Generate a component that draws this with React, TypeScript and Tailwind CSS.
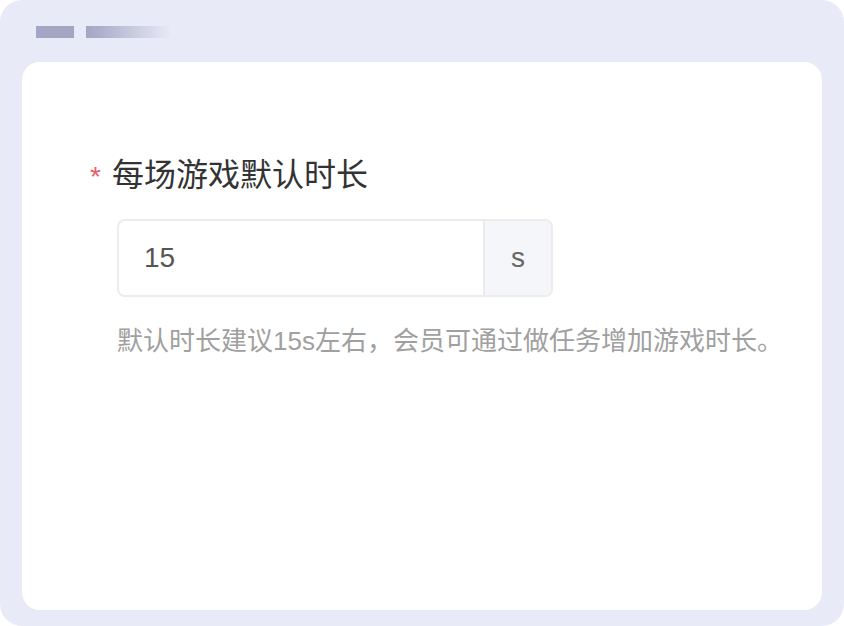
import React from "react";

export default function App() {
  const font = { fontFamily: '"Liberation Sans", "Noto Sans CJK SC", sans-serif' };
  return (
    <div className="w-[844px] h-[626px] bg-white" style={font}>
      <div className="w-full h-full rounded-[22px] bg-[#e9eaf7] flex flex-col px-[22px] pb-[16px]">
        <div className="h-[62px] flex items-start pt-[26px] pl-[14px] gap-[12px]">
          <div className="w-[38px] h-[12px] bg-[#a3a5c2]" />
          <div className="w-[86px] h-[12px] bg-gradient-to-r from-[#a3a5c2] to-[#e9eaf7]" />
        </div>
        <div className="flex-1 bg-white rounded-[18px] pl-[68px] pt-[89px]">
          <div className="flex items-center h-[48px]">
            <span className="w-[22px] text-[28px] leading-[48px] text-[#e3606c] pt-[4px]">*</span>
            <span className="text-[32px] leading-[48px] text-[#333333]">每场游戏默认时长</span>
          </div>
          <div className="ml-[27px] mt-[20px] w-[436px] h-[78px] flex border-2 border-[#ececec] rounded-[8px] overflow-hidden">
            <div className="flex-1 flex items-center pl-[25px] text-[28px] text-[#555555]">15</div>
            <div className="w-[68px] flex items-center justify-center border-l-2 border-[#ececec] bg-[#f5f6fa] text-[28px] text-[#666666]">s</div>
          </div>
          <div className="ml-[27px] mt-[26px] text-[26px] leading-[36px] text-[#a0a0a0]">
            默认时长建议15s左右，会员可通过做任务增加游戏时长。
          </div>
        </div>
      </div>
    </div>
  );
}
